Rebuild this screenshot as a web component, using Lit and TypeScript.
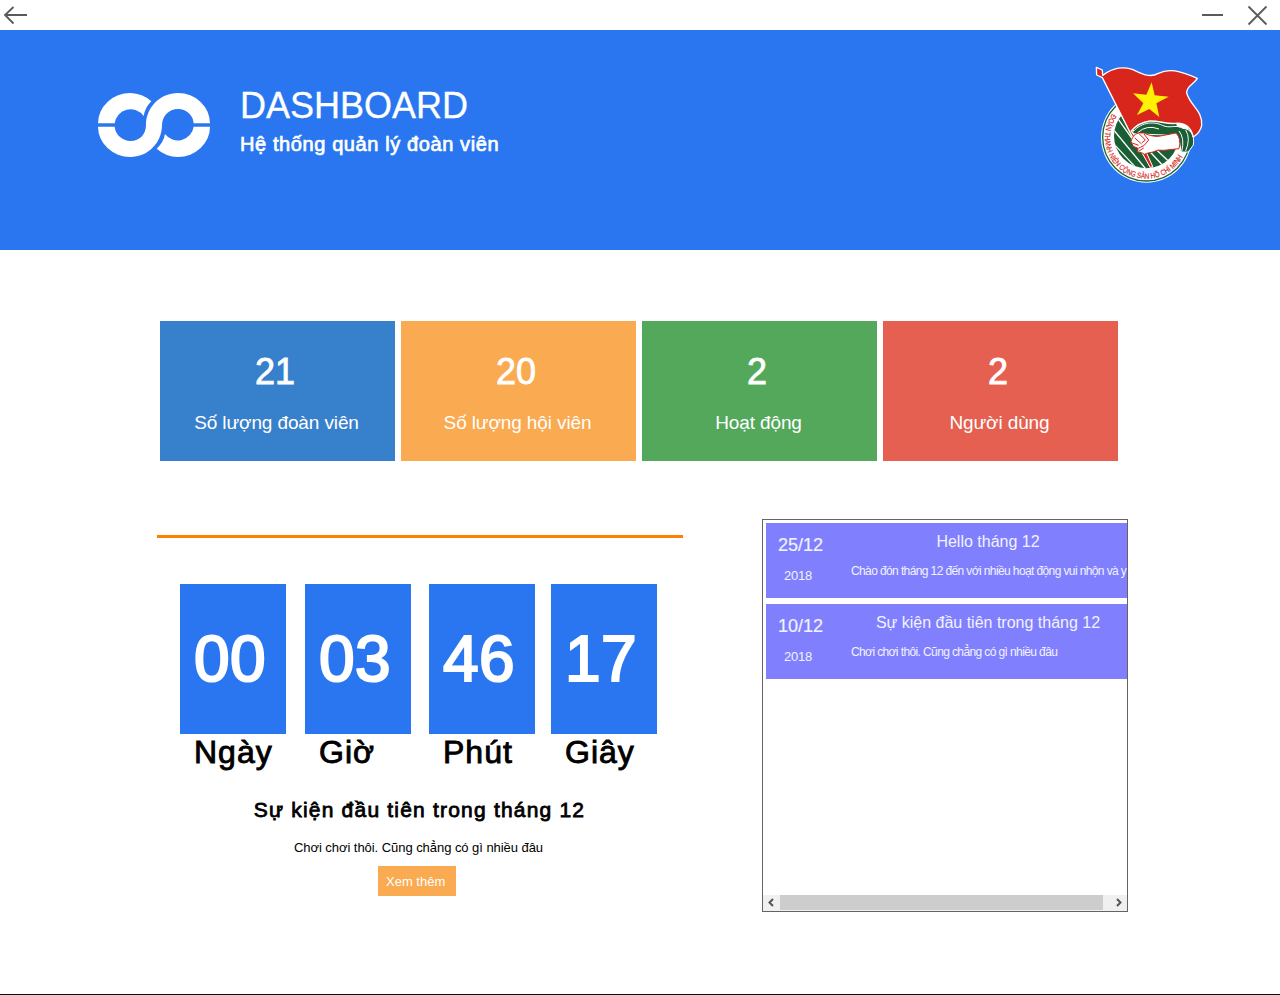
import { LitElement, html, css } from "lit";
import { customElement, property } from "lit/decorators.js";

const stats = [
  { value: "21", label: "Số lượng đoàn viên", tone: "blue" },
  { value: "20", label: "Số lượng hội viên", tone: "orange" },
  { value: "2", label: "Hoạt động", tone: "green" },
  { value: "2", label: "Người dùng", tone: "red" },
];

const units = [
  { value: "00", label: "Ngày" },
  { value: "03", label: "Giờ" },
  { value: "46", label: "Phút" },
  { value: "17", label: "Giây" },
];

const events = [
  { day: "25/12", year: "2018", title: "Hello tháng 12", text: "Chào đón tháng 12 đến với nhiều hoạt động vui nhộn và y" },
  { day: "10/12", year: "2018", title: "Sự kiện đầu tiên trong tháng 12", text: "Chơi chơi thôi. Cũng chẳng có gì nhiều đâu" },
];

@customElement("brand-mark")
class BrandMark extends LitElement {
  static styles = css`:host { display: block; } svg { display: block; overflow: visible; }`;
  render() {
    return html`<svg width="112" height="64" viewBox="39 39 336 192" fill="#fff">
      <path d="M39 130A97 91 0 0 1 136 39Q173 40 199 64Q180 83 176 108A48 48 0 0 0 89 130Z"/>
      <path d="M39 140H89A48 48 0 0 0 136 183C165 183 183 162 183 135C183 82 226 39 279 39A96 91 0 0 1 375 130H326A47 47 0 0 0 279 87C251 87 232 108 231 135C231 188 189 231 136 231A97 91 0 0 1 39 140Z"/>
      <path d="M375 140A96 91 0 0 1 279 231Q242 230 215 206Q236 187 240 162A48 48 0 0 0 326 140Z"/>
    </svg>`;
  }
}

@customElement("union-emblem")
class UnionEmblem extends LitElement {
  static styles = css`
    :host { display: block; }
    svg { display: block; }
    .motto { font: 400 23px "Liberation Sans", Arial, sans-serif; fill: #d9261c; stroke: #d9261c; stroke-width: 0.5px; }
  `;
  render() {
    return html`<svg width="130" height="135" viewBox="0 0 390 405">
      <defs>
        <clipPath id="disc"><circle cx="184" cy="243" r="97"/></clipPath>
        <path id="arc" d="M82 176A124 124 0 0 0 184 371A124 124 0 0 0 297 298"/>
      </defs>
      <circle cx="184" cy="247" r="136" fill="#fff"/>
      <circle cx="184" cy="247" r="131" fill="none" stroke="#176537" stroke-width="4"/>
      <circle cx="184" cy="243" r="97" fill="#1a5e35"/>
      <g clip-path="url(#disc)" stroke="#fff" stroke-width="4" fill="none">
        <path d="M92 182L205 340M112 175L160 250M86 225L185 345M82 262L150 335M190 285L232 330M215 285L250 318"/>
      </g>
      <text class="motto"><textPath href="#arc" textLength="404" lengthAdjust="spacingAndGlyphs">ĐOÀN THANH NIÊN CỘNG SẢN HỒ CHÍ MINH</textPath></text>
      <path d="M139 236C165 201 205 198 232 211C255 222 270 207 294 220C318 222 329 240 325 270L310 291L288 291L284 262L240 240Z" fill="#1a5e35" stroke="#fff" stroke-width="3"/>
      <path d="M302 225Q318 250 302 288M282 228Q300 250 290 290M158 233Q185 208 222 222" fill="none" stroke="#fff" stroke-width="3"/>
      <path d="M34 37L52 45L53 61C88 36 114 35 142 43C170 56 193 70 220 55C252 39 283 47 337 70C328 88 304 91 305 114C318 156 353 165 350 212C345 232 337 239 325 246C318 218 303 203 273 205C245 208 222 197 195 198C171 201 154 210 139 228L152 246L144 250L52 68L35 60Z" fill="#d9261c" stroke="#fff" stroke-width="4" stroke-linejoin="round"/>
      <path d="M200 82L209 121L251 125L214 145L223 186L193 162L156 180L175 145L144 115L184 119Z" fill="#fff200"/>
      <path d="M171 293L184 292L203 334L196 338Z" fill="#d9261c" stroke="#fff" stroke-width="3"/>
      <path d="M138 259C144 242 151 235 164 234L177 234C189 240 204 245 221 244L273 234Q290 251 282 281L236 286Q218 282 204 291L185 295Q179 302 170 293L158 291L159 280L145 274Z" fill="#fff" stroke="#d9261c" stroke-width="3"/>
      <path d="M142 264L161 271M149 249L170 267M163 237L181 255L171 263M177 237L191 255L178 271L160 280M161 289L176 279" fill="none" stroke="#d9261c" stroke-width="3"/>
    </svg>`;
  }
}

@customElement("stat-card")
class StatCard extends LitElement {
  @property() value = "";
  @property() label = "";
  static styles = css`
    :host { display: flex; flex-direction: column; align-items: center; height: 140px; box-sizing: border-box; padding-top: 30px; color: #fff; }
    .value { font-size: 36px; line-height: 42px; -webkit-text-stroke: 0.8px #fff; padding-right: 5px; }
    .label { font-size: 19px; line-height: 22px; margin-top: 19px; letter-spacing: -0.12px; padding-right: 2px; }
  `;
  render() {
    return html`<div class="value">${this.value}</div><div class="label">${this.label}</div>`;
  }
}

@customElement("event-item")
class EventItem extends LitElement {
  @property() day = "";
  @property() year = "";
  @property() heading = "";
  @property() text = "";
  static styles = css`
    :host { display: grid; grid-template-columns: 85px 1fr; width: 445px; height: 75px; background: #8080ff; color: #f2f2ff; white-space: nowrap; }
    .date { width: 69px; text-align: center; }
    .day { font-size: 18px; line-height: 22px; margin-top: 11px; -webkit-text-stroke: 0.2px #f2f2ff; }
    .year { font-size: 13px; line-height: 16px; margin-top: 12px; padding-right: 5px; letter-spacing: -0.2px; }
    .heading { font-size: 16px; line-height: 20px; margin-top: 9px; width: 274px; text-align: center; }
    .text { font-size: 12px; line-height: 16px; margin-top: 11px; letter-spacing: -0.61px; }
  `;
  render() {
    return html`<div class="date"><div class="day">${this.day}</div><div class="year">${this.year}</div></div>
      <div><div class="heading">${this.heading}</div><div class="text">${this.text}</div></div>`;
  }
}

@customElement("app-root")
class AppRoot extends LitElement {
  static styles = css`
    :host { display: flex; flex-direction: column; box-sizing: border-box; width: 1280px; height: 995px; overflow: hidden; background: #fff; color: #000; border-bottom: 1px solid #111; font-family: "Liberation Sans", Arial, sans-serif; }
    .titlebar { height: 30px; display: flex; justify-content: space-between; flex: none; }
    .titlebar svg { display: block; }
    .hero { height: 220px; flex: none; background: #2976f0; color: #fff; display: flex; align-items: flex-start; }
    .brand { margin: 63px 30px 0 98px; }
    .titles { flex: 1; padding-top: 55px; }
    .title { font-size: 36px; line-height: 42px; -webkit-text-stroke: 0.3px #fff; }
    .subtitle { font-size: 20px; line-height: 24px; margin-top: 5px; letter-spacing: 0.6px; -webkit-text-stroke: 0.7px #fff; }
    .emblem { margin: 25px 65px 0 0; }
    .stats { display: grid; grid-template-columns: repeat(4, 235px); gap: 6px; margin: 71px 0 0 160px; }
    .blue { background: #3780cc; }
    .orange { background: #faaa50; }
    .green { background: #53a85c; }
    .red { background: #e56050; }
    .lower { display: flex; align-items: flex-start; margin: 58px 0 0 157px; }
    .next { width: 526px; margin-top: 16px; display: flex; flex-direction: column; }
    .rule { height: 3px; background: #ff8000; }
    .clock { display: grid; grid-template-columns: 125px 124px 122px 106px; margin: 46px 0 0 23px; }
    .digits { width: 106px; height: 150px; box-sizing: border-box; padding-left: 14px; background: #2976f0; color: #fff; font-size: 64px; line-height: 151px; letter-spacing: 0.5px; -webkit-text-stroke: 2.2px #fff; }
    .unit { font-size: 32px; line-height: 36px; padding-left: 14px; letter-spacing: 1px; -webkit-text-stroke: 0.9px #000; }
    .event-title { text-align: center; font-size: 21px; line-height: 24px; margin-top: 28px; letter-spacing: 1.2px; -webkit-text-stroke: 0.8px #000; padding-right: 1px; }
    .event-text { text-align: center; font-size: 13px; line-height: 16px; margin-top: 18px; letter-spacing: -0.05px; padding-right: 3px; }
    .more { align-self: flex-start; width: 78px; height: 30px; box-sizing: border-box; padding: 1px 0 0 8px; margin: 10px 0 0 221px; border: 0; background: #faaa50; color: #fff; font: 13px/30px "Liberation Sans", Arial, sans-serif; text-align: left; white-space: nowrap; }
    .panel { box-sizing: border-box; width: 366px; height: 393px; margin-left: 79px; border: 1px solid #646464; display: flex; flex-direction: column; }
    .list { flex: 1; overflow: hidden; display: flex; flex-direction: column; gap: 6px; padding: 3px 0 0 3px; }
    .scroll { height: 16px; display: flex; background: #f0f0f0; }
    .scroll svg { display: block; width: 17px; height: 15px; }
    .thumb { width: 323px; height: 15px; background: #cdcdcd; }
    .gap { flex: 1; }
  `;
  render() {
    return html`
      <div class="titlebar">
        <svg width="32" height="30" fill="none" stroke="#5a5a5a" stroke-width="1.8"><path d="M27 15H5M13.5 7L5 15L13.5 23.5"/></svg>
        <svg width="90" height="30" fill="none" stroke="#5a5a5a" stroke-width="1.8"><path d="M12 15H33M58.500 6.500L76.500 24.500M76.500 6.500L58.500 24.500"/></svg>
      </div>
      <div class="hero">
        <brand-mark class="brand"></brand-mark>
        <div class="titles"><div class="title">DASHBOARD</div><div class="subtitle">Hệ thống quản lý đoàn viên</div></div>
        <union-emblem class="emblem"></union-emblem>
      </div>
      <div class="stats">
        ${stats.map((s) => html`<stat-card class=${s.tone} .value=${s.value} .label=${s.label}></stat-card>`)}
      </div>
      <div class="lower">
        <div class="next">
          <div class="rule"></div>
          <div class="clock">
            ${units.map((u) => html`<div><div class="digits">${u.value}</div><div class="unit">${u.label}</div></div>`)}
          </div>
          <div class="event-title">Sự kiện đầu tiên trong tháng 12</div>
          <div class="event-text">Chơi chơi thôi. Cũng chẳng có gì nhiều đâu</div>
          <button class="more">Xem thêm</button>
        </div>
        <div class="panel">
          <div class="list">
            ${events.map((e) => html`<event-item .day=${e.day} .year=${e.year} .heading=${e.title} .text=${e.text}></event-item>`)}
          </div>
          <div class="scroll">
            <svg viewBox="0 0 17 15" fill="none" stroke="#555" stroke-width="2"><path d="M10 4L6.500 7.500L10 11"/></svg>
            <div class="thumb"></div>
            <div class="gap"></div>
            <svg viewBox="0 0 17 15" fill="none" stroke="#555" stroke-width="2"><path d="M7 4L10.500 7.500L7 11"/></svg>
          </div>
        </div>
      </div>`;
  }
}
